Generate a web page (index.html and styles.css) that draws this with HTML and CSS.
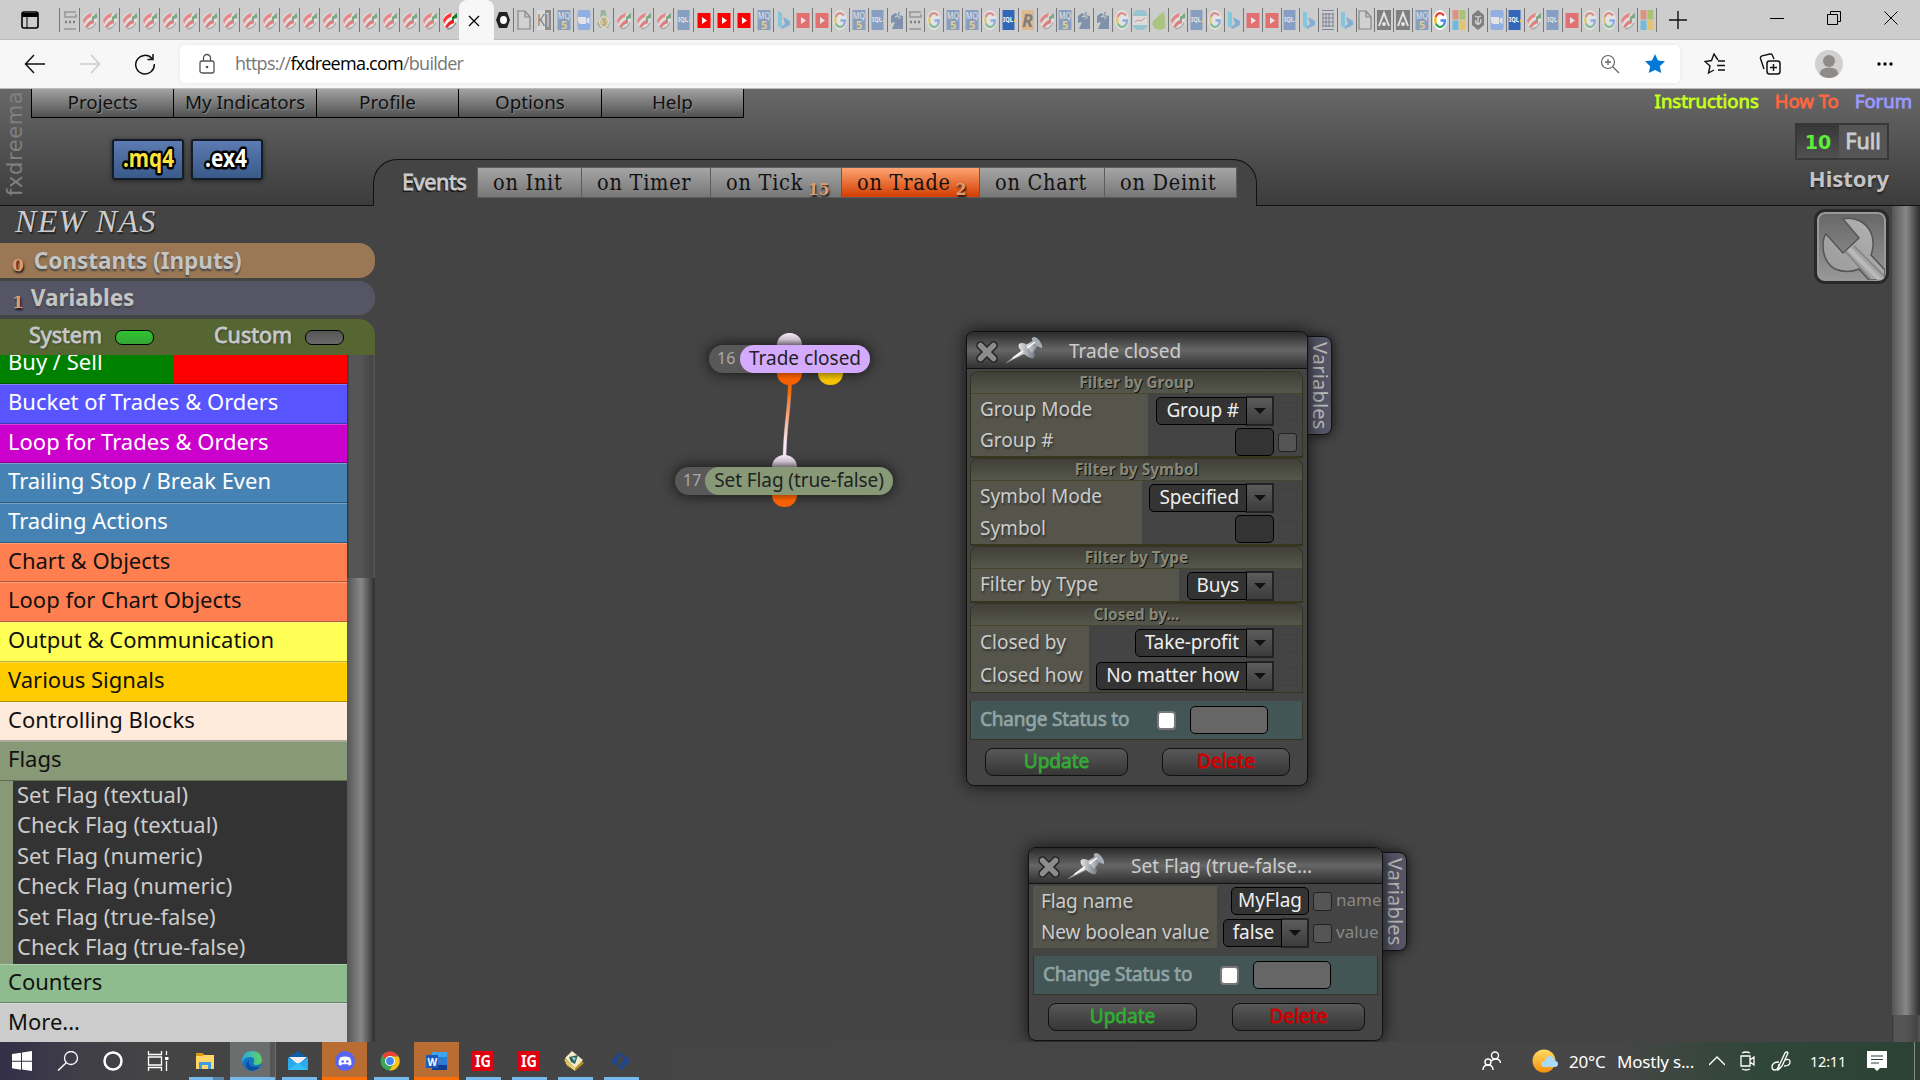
FILE: index.html
```html
<!DOCTYPE html>
<html lang="en">
<head>
    <meta charset="UTF-8">
    <title>fxDreema builder</title>
    <link rel="stylesheet" href="styles.css">
</head>
<body>
    <svg class="sprite">
        <symbol id="i-fx" viewBox="0 0 14 20" preserveAspectRatio="none"><ellipse cx="7" cy="11" rx="7" ry="8" fill="#f2f2f2"/><path d="M0 10Q3 4 9 3l-1 4Q4 8 1 14z" fill="#f33"/><path d="M2 17Q5 11 11 9v4q-4 1-7 5z" fill="#e22"/><path d="M9 7l5-4v5q-3 0-5 3z" fill="#1a7a2a"/><path d="M4 18.500q6 1 9-6" fill="none" stroke="#888" stroke-width="1.500"/></symbol>
        <symbol id="i-yt" viewBox="0 0 14 20" preserveAspectRatio="none"><path d="M.5 3h13v15H.5z" fill="#f00"/><path d="M5 7l5 3.500-5 3.500z" fill="#fff"/></symbol>
        <symbol id="i-g" viewBox="0 0 14 20" preserveAspectRatio="none"><ellipse cx="7" cy="10" rx="7" ry="10" fill="#fff"/><g fill="none" stroke-width="2.300"><path d="M11 5.500Q9 3.200 7 3.200 4 3.200 2.700 7" stroke="#ea4335"/><path d="M2.700 7q-1 3 0 6.500" stroke="#fbbc05"/><path d="M2.700 13.500Q4.500 17 7 17q2 0 3.500-1.700" stroke="#34a853"/><path d="M10.500 15.300q1.500-2 1.500-4.800H7.500" stroke="#4285f4"/></g></symbol>
        <symbol id="i-mq5" viewBox="0 0 14 20" preserveAspectRatio="none"><path d="M.5 0h13v20H.5z" fill="#3568b5"/><text x="1" y="8.500" font-size="9" textLength="12" lengthAdjust="spacingAndGlyphs" fill="#fff">MQ</text><text x="4" y="18.500" font-size="11" font-weight="bold" fill="#fc3">5</text></symbol>
        <symbol id="i-mql" viewBox="0 0 14 20" preserveAspectRatio="none"><path d="M.5 0h12v20H.5z" fill="#3467b8"/><text x="1" y="12" font-size="7" font-weight="bold" textLength="10" lengthAdjust="spacingAndGlyphs" fill="#fff">IQL</text><path d="M12 9l2 3h-2z" fill="#fc3"/></symbol>
        <symbol id="i-bing" viewBox="0 0 14 20" preserveAspectRatio="none"><path d="M1 1l4 2v13l-2 2-2-2z" fill="#29c3f0"/><path d="M6 7l7 4v4l-8 4-1-2 4-3z" fill="#2d8bdf"/></symbol>
        <symbol id="i-zoom" viewBox="0 0 14 20" preserveAspectRatio="none"><rect x=".5" width="13" height="20" rx="2" fill="#4a8cff"/><path d="M1 7h8v7H3q-2-1-2-3zM9.500 9l3-2v7l-3-2z" fill="#fff"/></symbol>
        <symbol id="i-horse" viewBox="0 0 14 20" preserveAspectRatio="none"><path d="M1 6l4-3 2 1 3-3-1 4 4 1v13H2l3-7-4 1z" fill="#254a85"/><path d="M7 3l1 2-3 2 5-1M8 9l3-2" stroke="#ccc" fill="none"/></symbol>
        <symbol id="i-lines" viewBox="0 0 14 20" preserveAspectRatio="none"><path d="M1 2h12M2 2v5h11v-3M1 19h12" stroke="#555" fill="none" stroke-width="1.500"/><path d="M2 12h2m2 0h2m2 0h2" stroke="#222" stroke-width="2.500"/></symbol>
        <symbol id="i-doc" viewBox="0 0 14 20" preserveAspectRatio="none"><path d="M1 1h7l5 6v12H1zM8 1v6h5" fill="#e2e2e2" fill-opacity=".5" stroke="#333" stroke-width="1.200"/></symbol>
        <symbol id="i-k" viewBox="0 0 14 20" preserveAspectRatio="none"><path d="M0 0h8v20H0z" fill="#e8e8e8"/><path d="M8 0h6v20H8z" fill="#444"/><text x="0" y="16" font-size="16" textLength="8" lengthAdjust="spacingAndGlyphs" fill="#222">K</text><path d="M9 4l2-1v14" stroke="#fff" fill="none"/></symbol>
        <symbol id="i-coin" viewBox="0 0 14 20" preserveAspectRatio="none"><path d="M4 0h4l2 7 3 6-2 5H3l-3-4 3-6z" fill="#5c9457"/><ellipse cx="7" cy="12" rx="4.500" ry="6" fill="#e2b545" stroke="#fff"/><path d="M5.500 9.500q3-1 2.500 1l-1.500 1.500q3 0 1.500 2.500l-2.500.5" fill="none" stroke="#25518c"/></symbol>
        <symbol id="i-nut" viewBox="0 0 14 20" preserveAspectRatio="none"><path d="M3 2h8l3 8-3 8H3l-3-8z" fill="#222"/><ellipse cx="7.500" cy="10" rx="3.500" ry="4" fill="#fff"/></symbol>
        <symbol id="i-r" viewBox="0 0 14 20" preserveAspectRatio="none"><path d="M1 0h12v20H1z" fill="#f4a142"/><text x="1" y="17" font-size="18" font-style="italic" font-weight="bold" textLength="11" lengthAdjust="spacingAndGlyphs" fill="#222">R</text></symbol>
        <symbol id="i-chart" viewBox="0 0 14 20" preserveAspectRatio="none"><rect width="14" height="20" rx="5" fill="#55bcd5"/><path d="M0 6h14v9H0z" fill="#eee"/><path d="M2 12l3-2 3 1 4-3" stroke="#e33" fill="none"/></symbol>
        <symbol id="i-leaf" viewBox="0 0 14 20" preserveAspectRatio="none"><path d="M12 1q2 10 1 17-4 3-9 1-5-2-3-8z" fill="#80ba27"/></symbol>
        <symbol id="i-grid" viewBox="0 0 14 20" preserveAspectRatio="none"><path d="M1 .500h12M1 19.500h12M1 4h12M1 8h12M1 12h12M1 16h12M2 3v14M5 3v14M8 3v14M12 3v14" stroke="#235"/></symbol>
        <symbol id="i-a" viewBox="0 0 14 20" preserveAspectRatio="none"><path d="M0 0h14v20H0z" fill="#222"/><path d="M2 16l5-13 5 13" stroke="#fff" stroke-width="2" fill="none"/><circle cx="7" cy="14" r="2" fill="#fff"/></symbol>
        <symbol id="i-ms" viewBox="0 0 14 20" preserveAspectRatio="none"><path d="M.5 0h6v9.500h-6z" fill="#f25022"/><path d="M7.500 0h6v9.500h-6z" fill="#7fba00"/><path d="M.5 10.500h6V20h-6z" fill="#00a4ef"/><path d="M7.500 10.500h6V20h-6z" fill="#ffb900"/></symbol>
        <symbol id="i-nyt" viewBox="0 0 14 20" preserveAspectRatio="none"><path d="M7 0l6 5v10l-6 5-6-5V5z" fill="#222"/><path d="M4 6q3 2 6 0M7 7v8M10 9q0 6-4 5-2-1-1-4" stroke="#ddd" fill="none" stroke-width="1.300"/></symbol>
        <symbol id="i-pin" viewBox="0 0 38 28"><path d="M1 27L17 14l4 3z" fill="#ddd" stroke="#777" stroke-width=".6"/><path d="M14 8q4-3 11 3t4 11q-5 1-11-5t-4-9z" fill="url(#pinGrad)"/><path d="M21 9l8-5 5 5-7 8z" fill="url(#pinGrad)"/><path d="M27 2q3-3 7 2t3 8q-3 0-7-4t-3-6z" fill="#a5acb3"/><path d="M22 12l8-6M8 22l10-7" stroke="#fff" stroke-width="1.500"/></symbol>
        <symbol id="i-x" viewBox="0 0 24 24"><path d="M5.500 5.500l13 13M18.500 5.500l-13 13" stroke="#222" stroke-width="8.500" stroke-linecap="round"/><path d="M5.500 5.500l13 13M18.500 5.500l-13 13" stroke="#8c8c8c" stroke-width="5.500" stroke-linecap="round"/></symbol>
    </svg>

    <div class="tabstrip">
        <svg class="tab-menu" width="20" height="20" viewBox="0 0 20 20"><rect x="2" y="2" width="16" height="16" rx="2" fill="none" stroke="#000" stroke-width="1.600"/><path d="M2 3h16v4H2z"/><path d="M7 7v11" stroke="#000"/></svg>
        <div class="tabs" id="tabs-left"></div>
        <div class="tab-active"><svg width="12" height="12" viewBox="0 0 12 12"><path d="M1 1l10 10M11 1L1 11" stroke="#000" stroke-width="1.300"/></svg></div>
        <div class="tabs" id="tabs-mid"></div>
        <div class="tabs" id="tabs-right"></div>
        <svg class="tab-plus" width="18" height="18" viewBox="0 0 18 18"><path d="M9 0v18M0 9h18" stroke="#111" stroke-width="1.400"/></svg>
        <div class="window-buttons">
            <svg width="14" height="14" viewBox="0 0 14 14"><path d="M0 7.500h14" stroke="#000"/></svg>
            <svg width="14" height="14" viewBox="0 0 14 14"><path d="M.5 3.500h10v10H.5zM3.500 3.500v-3h10v10h-3" fill="none" stroke="#000"/></svg>
            <svg width="14" height="14" viewBox="0 0 14 14"><path d="M.5.5l13 13M13.500.5l-13 13" stroke="#000"/></svg>
        </div>
    </div>

    <div class="toolbar">
        <div class="nav">
            <svg width="22" height="20" viewBox="0 0 22 20"><path d="M21 10H2M10 1L1.500 10l8.500 9" fill="none" stroke="#111" stroke-width="1.500"/></svg>
            <svg width="22" height="20" viewBox="0 0 22 20"><path d="M1 10h19M12 1l8.500 9-8.500 9" fill="none" stroke="#ccc" stroke-width="1.500"/></svg>
            <svg width="22" height="22" viewBox="0 0 22 22"><path d="M18 5.500A9.300 9.300 0 1 0 20.300 11M19 1v5.500h-5.500" fill="none" stroke="#111" stroke-width="1.500"/></svg>
        </div>
        <div class="address">
            <svg width="18" height="22" viewBox="0 0 18 22"><rect x="2" y="8" width="14" height="12" rx="2" fill="none" stroke="#555" stroke-width="1.300"/><path d="M5.500 8V5a3.500 3.500 0 0 1 7 0v3" fill="none" stroke="#555" stroke-width="1.300"/><circle cx="9" cy="14" r="1.300" fill="#555"/></svg>
            <span class="url">https://<b>fxdreema.com</b>/builder</span>
            <svg class="zoom-icon" width="20" height="20" viewBox="0 0 20 20"><circle cx="8" cy="8" r="6.500" fill="none" stroke="#666" stroke-width="1.200"/><path d="M13 13l6 6M8 5v6M5 8h6" stroke="#666" stroke-width="1.300"/></svg>
            <svg width="22" height="22" viewBox="0 0 22 22"><path d="M11 1l3 6.500 7 .8-5.200 4.900L17.300 20 11 17l-6.300 3 1.500-6.800L1 8.300l7-.8z" fill="#0078d7"/></svg>
        </div>
        <div class="tools">
            <svg width="22" height="22" viewBox="0 0 22 22"><path d="M14 7L10 1 7.500 7.500 1 8.500l5 4.500-1.500 7L10 17M14 8h7M13 12.500h8M14 17h7" fill="none" stroke="#111" stroke-width="1.400"/></svg>
            <svg width="22" height="22" viewBox="0 0 22 22"><rect x="8" y="8" width="13" height="13" rx="2.500" fill="none" stroke="#111" stroke-width="1.500"/><path d="M14.500 11v7M11 14.500h7M5 16L1.500 5.500q-.5-2 1.500-2.700L11 1q2-.3 2.500 1.500L15 6" fill="none" stroke="#111" stroke-width="1.400"/></svg>
            <svg width="28" height="28" viewBox="0 0 28 28"><circle cx="14" cy="14" r="14" fill="#d2d0ce"/><circle cx="14" cy="11" r="6" fill="#8f8b88"/><path d="M4.500 24q1-6.500 9.500-6.500T23.500 24Q20 28 14 28t-9.500-4z" fill="#8f8b88"/></svg>
            <svg width="18" height="6" viewBox="0 0 18 6"><circle cx="3" cy="3" r="1.700"/><circle cx="9" cy="3" r="1.700"/><circle cx="15" cy="3" r="1.700"/></svg>
        </div>
    </div>

    <div class="app">
        <div class="header">
            <div class="brand">fxdreema</div>
            <div class="header-left">
                <div class="menu">
                    <div>Projects</div>
                    <div>My Indicators</div>
                    <div>Profile</div>
                    <div>Options</div>
                    <div>Help</div>
                </div>
                <div class="exports">
                    <div class="export"><svg width="68" height="38"><text class="mq" x="9" y="26" textLength="51" lengthAdjust="spacingAndGlyphs">.mq4</text></svg></div>
                    <div class="export"><svg width="68" height="38"><text class="ex" x="12" y="26" textLength="42" lengthAdjust="spacingAndGlyphs">.ex4</text></svg></div>
                </div>
            </div>
            <div class="events">
                <span class="events-title">Events</span>
                <div class="event-list">
                    <div class="event e-init">on Init</div>
                    <div class="event e-timer">on Timer</div>
                    <div class="event e-tick">on Tick <i>15</i></div>
                    <div class="event e-trade">on Trade <i>2</i></div>
                    <div class="event e-chart">on Chart</div>
                    <div class="event e-deinit">on Deinit</div>
                </div>
            </div>
            <div class="header-right">
                <div class="links"><span class="l-inst">Instructions</span><span class="l-how">How To</span><span class="l-forum">Forum</span></div>
                <div class="full"><b>10</b><span>Full</span></div>
                <div class="history">History</div>
            </div>
        </div>

        <div class="main">
            <div class="sidebar">
                <div class="project-name">NEW NAS</div>
                <div class="bar constants"><i>0</i>Constants (Inputs)</div>
                <div class="bar variables"><i>1</i>Variables</div>
                <div class="sources">
                    <span class="src-system">System</span><span class="led on"></span>
                    <span class="src-custom">Custom</span><span class="led"></span>
                </div>
                <div class="library">
                    <div class="blocks">
                        <div class="cat buysell">Buy / Sell</div>
                        <div class="cat bucket">Bucket of Trades &amp; Orders</div>
                        <div class="cat loop">Loop for Trades &amp; Orders</div>
                        <div class="cat trading">Trailing Stop / Break Even</div>
                        <div class="cat trading">Trading Actions</div>
                        <div class="cat charts">Chart &amp; Objects</div>
                        <div class="cat charts">Loop for Chart Objects</div>
                        <div class="cat output">Output &amp; Communication</div>
                        <div class="cat signals">Various Signals</div>
                        <div class="cat control">Controlling Blocks</div>
                        <div class="cat flags">Flags</div>
                        <div class="sub">
                            <div>Set Flag (textual)</div>
                            <div>Check Flag (textual)</div>
                            <div>Set Flag (numeric)</div>
                            <div>Check Flag (numeric)</div>
                            <div>Set Flag (true-false)</div>
                            <div>Check Flag (true-false)</div>
                        </div>
                        <div class="cat counters">Counters</div>
                        <div class="cat more">More...</div>
                    </div>
                    <div class="scroll"><div class="thumb"></div></div>
                </div>
            </div>

            <div class="canvas">
                <svg class="wire" width="30" height="90" viewBox="0 0 30 90">
                    <linearGradient id="pinGrad"><stop offset="0" stop-color="#e4e6e8"/><stop offset="1" stop-color="#707880"/></linearGradient>
                    <linearGradient id="wireGrad" x1="0" y1="0" x2="0" y2="1"><stop offset=".15" stop-color="#ff6600"/><stop offset=".8" stop-color="#f8e8f8"/></linearGradient>
                    <path d="M15 5C15 35 10 50 9.500 85" fill="none" stroke="#777" stroke-width="4"/>
                    <path d="M15 5C15 35 10 50 9.500 85" fill="none" stroke="url(#wireGrad)" stroke-width="3"/>
                </svg>
                <div class="node node-trade">
                    <span class="port in"></span><span class="port out"></span><span class="port alt"></span>
                    <span class="num">16</span><span class="name">Trade closed</span>
                </div>
                <div class="node node-flag">
                    <span class="port in"></span><span class="port out"></span>
                    <span class="num">17</span><span class="name">Set Flag (true-false)</span>
                </div>

                <div class="panel panel-trade">
                    <div class="side-tab">Variables</div>
                    <div class="window">
                        <div class="title"><svg width="24" height="24"><use href="#i-x"/></svg><svg width="38" height="28"><use href="#i-pin"/></svg><span>Trade closed</span></div>
                        <div class="group g1">
                            <div class="group-title">Filter by Group</div>
                            <div class="group-body">
                                <div class="labels"><div>Group Mode</div><div>Group #</div></div>
                                <div class="fields">
                                    <div class="field"><span class="select">Group #<i></i></span><span class="check off"></span></div>
                                    <div class="field"><span class="input"></span><span class="check"></span></div>
                                </div>
                            </div>
                        </div>
                        <div class="group g2">
                            <div class="group-title">Filter by Symbol</div>
                            <div class="group-body">
                                <div class="labels"><div>Symbol Mode</div><div>Symbol</div></div>
                                <div class="fields">
                                    <div class="field"><span class="select">Specified<i></i></span><span class="check off"></span></div>
                                    <div class="field"><span class="input"></span><span class="check off"></span></div>
                                </div>
                            </div>
                        </div>
                        <div class="group g3">
                            <div class="group-title">Filter by Type</div>
                            <div class="group-body">
                                <div class="labels"><div>Filter by Type</div></div>
                                <div class="fields">
                                    <div class="field"><span class="select">Buys<i></i></span><span class="check off"></span></div>
                                </div>
                            </div>
                        </div>
                        <div class="group g4">
                            <div class="group-title">Closed by...</div>
                            <div class="group-body">
                                <div class="labels"><div>Closed by</div><div>Closed how</div></div>
                                <div class="fields">
                                    <div class="field"><span class="select">Take-profit<i></i></span><span class="check off"></span></div>
                                    <div class="field"><span class="select">No matter how<i></i></span><span class="check off"></span></div>
                                </div>
                            </div>
                        </div>
                        <div class="status"><span>Change Status to</span><b></b><i></i></div>
                        <div class="actions"><div class="btn update">Update</div><div class="btn delete">Delete</div></div>
                    </div>
                </div>

                <div class="panel panel-flag">
                    <div class="side-tab">Variables</div>
                    <div class="window">
                        <div class="title"><svg width="24" height="24"><use href="#i-x"/></svg><svg width="38" height="28"><use href="#i-pin"/></svg><span>Set Flag (true-false...</span></div>
                        <div class="group-body">
                            <div class="labels"><div>Flag name</div><div>New boolean value</div></div>
                            <div class="fields">
                                <div class="field"><span class="input text">MyFlag</span><span class="check"></span><em>name</em></div>
                                <div class="field"><span class="select">false<i></i></span><span class="check"></span><em>value</em></div>
                            </div>
                        </div>
                        <div class="status"><span>Change Status to</span><b></b><i></i></div>
                        <div class="actions"><div class="btn update">Update</div><div class="btn delete">Delete</div></div>
                    </div>
                </div>

                <div class="settings">
                    <svg width="67" height="67" viewBox="0 0 67 67">
                        <linearGradient id="wrenchGrad" x1="0" y1="1" x2="1" y2="0"><stop offset="0" stop-color="#999"/><stop offset="1" stop-color="#b4b4b4"/></linearGradient>
                        <path d="M25 6q8-2 17 2 14 8 13 25-1 7-2 9l14 15v10H51L41 56q-12 5-24 0Q5 49 5 32q0-7 3-11l17 19 16-15z" fill="url(#wrenchGrad)" stroke="#555" stroke-width="1.500"/>
                        <path d="M27 38l26 29M36 33l31 31" stroke="#777" stroke-width="2" opacity=".6"/>
                        <path d="M31 36l34 34" stroke="#c4c4c4" stroke-width="4" opacity=".7"/>
                    </svg>
                </div>
            </div>
            <div class="scroll page-scroll"><div class="thumb"></div></div>
        </div>
    </div>

    <div class="taskbar">
        <div class="task"><svg width="20" height="20" viewBox="0 0 20 20"><path d="M0 3l9-1.300v8H0zM10 1.500L20 0v9.700H10zM0 10.700h9v8L0 17.300zM10 10.700h10V20l-10-1.500z" fill="#fff"/></svg></div>
        <div class="task"><svg width="22" height="20" viewBox="0 0 22 20"><circle cx="14" cy="7" r="6.500" fill="none" stroke="#fff" stroke-width="1.300"/><path d="M9.500 11.500L1 19.500" stroke="#fff" stroke-width="1.500"/></svg></div>
        <div class="task"><svg width="20" height="20" viewBox="0 0 20 20"><circle cx="10" cy="10" r="8.500" fill="none" stroke="#fff" stroke-width="2.500"/></svg></div>
        <div class="task"><svg width="22" height="20" viewBox="0 0 22 20"><path d="M1.500 0v3.500h13V0M1.500 20v-3.500h13V20M1.500 6h13v8h-13zM19.500 0v4M19.500 10v10" fill="none" stroke="#fff" stroke-width="1.300"/><path d="M18 6h3.500v3H18z" fill="#fff"/></svg></div>
        <div class="task open split"><svg width="20" height="18" viewBox="0 0 20 18"><path d="M1 1h6l2 2h10v14H1z" fill="#ffd665"/><path d="M1 1h6l2 2-2 1H1z" fill="#d99a14"/><path d="M4 17V10h12v7h-3v-4H7v4z" fill="#3f9be6"/></svg></div>
        <div class="task open current"><svg width="22" height="22" viewBox="0 0 22 22"><linearGradient id="edgeA" x1="0" x2="1"><stop offset="0" stop-color="#2aa9e0"/><stop offset="1" stop-color="#5fd35f"/></linearGradient><circle cx="11" cy="11" r="10" fill="#1673c4"/><path d="M1 10Q2 1 11 1t10 9q0 5-6 5-4 0-2-3 1-5-4-5-6 0-8 6z" fill="url(#edgeA)"/><path d="M8 10q-2 8 11 7-5 5-11 3Q2 16 8 10z" fill="#0c4fa0"/></svg></div>
        <div class="task open"><svg width="20" height="20" viewBox="0 0 20 20"><path d="M0 6.500L10 0l10 6.500L10 14z" fill="#0d5da8"/><path d="M1 6h18l-9 8z" fill="#f0f0f0"/><path d="M0 6.500L10 13l10-6.500V19H0z" fill="#2fa9ee"/><path d="M0 19l10-7 10 7z" fill="#36c0f8"/></svg></div>
        <div class="task alert"><svg width="20" height="20" viewBox="0 0 20 20"><circle cx="10" cy="10" r="10" fill="#5865f2"/><path d="M5 6.500q5-2 10 0 2 4 1.500 7l-2.500 1.300-1-1.500H7l-1 1.500-2.500-1.300q-.5-3 1.500-7z" fill="#fff"/><circle cx="7.700" cy="10.500" r="1.300" fill="#5865f2"/><circle cx="12.300" cy="10.500" r="1.300" fill="#5865f2"/></svg></div>
        <div class="task open"><svg width="20" height="20" viewBox="0 0 20 20"><circle cx="10" cy="10" r="9.500" fill="#3aa757"/><path d="M10 .5A9.500 9.500 0 0 1 18.200 5.500H10a4.500 4.500 0 0 0-4 2.500L2 5A9.500 9.500 0 0 1 10 .5z" fill="#ea4335"/><path d="M18.500 5.500A9.500 9.500 0 0 1 9.500 19.500l4.500-7.500a4.500 4.500 0 0 0-4-6.500z" fill="#fbc116"/><circle cx="10" cy="10" r="4.500" fill="#4285f4" stroke="#fff" stroke-width="1.200"/></svg></div>
        <div class="task alert word"><svg width="21" height="20" viewBox="0 0 21 20"><path d="M6 1h15v18H6z" fill="#2b7cd3"/><path d="M6 1h15v5H6z" fill="#41a5ee"/><path d="M6 14h15v5H6z" fill="#103f91"/><path d="M0 4h12v13H0z" fill="#185abd"/><text x="1.500" y="14.500" font-size="10" font-weight="bold" fill="#fff">W</text></svg></div>
        <div class="task open ig"><svg width="21" height="20" viewBox="0 0 21 20"><path d="M0 0h21v20H0z" fill="#e1000f"/><text x="3" y="16" font-size="16" font-weight="bold" textLength="16" lengthAdjust="spacingAndGlyphs" fill="#fff">IG</text></svg></div>
        <div class="task open ig"><svg width="21" height="20" viewBox="0 0 21 20"><path d="M0 0h21v20H0z" fill="#e1000f"/><text x="3" y="16" font-size="16" font-weight="bold" textLength="16" lengthAdjust="spacingAndGlyphs" fill="#fff">IG</text></svg></div>
        <div class="task open"><svg width="20" height="20" viewBox="0 0 20 20"><path d="M0 9l7-7 13 10-9 8L3 15z" fill="#b8901f"/><path d="M1 7l7-7 11 9-8 8z" fill="#f3ecc8"/><path d="M1 9l10 9M2 12l9 7" stroke="#fff0b0"/><path d="M5 6l9-2-3 9-4-2z" fill="#2c6a57"/><path d="M8 6l4 1-2 3z" fill="#a5d4ee"/></svg></div>
        <div class="task open"><svg width="20" height="18" viewBox="0 0 20 18"><path d="M10 0L1 9l5 5 2-2V7l5-5zM12 5l3-2 5 6-9 9-3-3 4-3V9l3-2z" fill="#1f4591"/></svg></div>
        <div class="tray">
            <svg class="t-people" width="20" height="20" viewBox="0 0 20 20"><g fill="none" stroke="#fff" stroke-width="1.400"><circle cx="13" cy="4.500" r="3.500"/><circle cx="6" cy="11" r="3"/><path d="M9 10q2-2 5-2 4 0 4.500 4M1 19q0-5 5-5t5 5"/></g></svg>
            <svg class="t-weather" width="26" height="24" viewBox="0 0 26 24"><linearGradient id="sunGrad" x1="0" y1="0" x2="0" y2="1"><stop offset="0" stop-color="#ffdb62"/><stop offset="1" stop-color="#f8900a"/></linearGradient><circle cx="12" cy="12" r="11.500" fill="url(#sunGrad)"/><path d="M13 18q-4 0-4-3t4-3q1-5 5-5 4 0 5 5 3 0 3 3t-3 3z" fill="#a9dbf8"/></svg>
            <span class="t-temp">20°C</span><span class="t-sky">Mostly s...</span>
            <svg class="t-up" width="16" height="10" viewBox="0 0 16 10"><path d="M0 9l8-8 8 8" fill="none" stroke="#fff" stroke-width="1.300"/></svg>
            <svg class="t-meet" width="16" height="20" viewBox="0 0 16 20"><path d="M1 5h9v10H1zM10 9l4-3v8l-4-3M2 2q4-2 8 0M2 18q4 2 8 0" fill="none" stroke="#fff" stroke-width="1.300"/></svg>
            <svg class="t-pen" width="20" height="20" viewBox="0 0 20 20"><path d="M8 15l6-13q2-2 3 0l-6 13-4 4zM8 11q-7 0-7 5 0 3 3 3t4-6M14 9q5-2 5 2t-6 4" fill="none" stroke="#fff" stroke-width="1.300"/></svg>
            <span class="t-time">12:11</span>
            <svg class="t-note" width="20" height="20" viewBox="0 0 20 20"><path d="M0 0h20v17h-7l-3 3-3-3H0z" fill="#fff"/><path d="M4 5h12M4 8.500h12M4 12h8" stroke="#2f4034" stroke-width="1.200"/></svg>
        </div>
    </div>

    <script src="script.js"></script>
</body>
</html>
```
FILE: styles.css
```css
* {
    box-sizing: border-box;
}
body {
    margin: 0;
    width: 1920px;
    height: 1080px;
    overflow: hidden;
    display: flex;
    flex-direction: column;
    font-family: "Noto Sans", sans-serif;
    background: #444;
}
svg {
    display: block;
    flex-shrink: 0;
}
.sprite {
    display: none;
}

/* browser */
.tabstrip {
    height: 40px;
    background: #cdcdcd;
    display: flex;
    align-items: center;
    border-bottom: 1px solid #bbb;
}
.tab-menu {
    margin: 0 19px 0 20px;
}
.tabs {
    display: flex;
}
.tab {
    width: 20px;
    height: 24px;
    border-left: 1px solid #777;
    display: flex;
    align-items: center;
    justify-content: center;
}
#tabs-left {
    width: 400px;
}
#tabs-mid {
    margin-left: -1px;
}
#tabs-mid .tab:first-child {
    border-left: none;
}
#tabs-right .tab {
    width: 18.760px;
}
#tabs-right {
    border-right: 1px solid #777;
}
.tab svg {
    width: 14px;
    height: 20px;
    opacity: .45;
}
.tab.lit svg {
    opacity: 1;
}
.tab-active {
    align-self: flex-start;
    width: 35px;
    height: 41px;
    margin-bottom: -1px;
    padding-right: 5px;
    background: #f7f7f7;
    border-radius: 8px 8px 0 0;
    display: flex;
    align-items: center;
    justify-content: center;
}
.tab-plus {
    margin-left: 12px;
}
.window-buttons {
    margin-left: auto;
    margin-right: 22px;
    display: flex;
    gap: 43px;
    padding-bottom: 3px;
}
.toolbar {
    height: 49px;
    background: #f7f7f7;
    border-bottom: 1px solid #bbb;
    display: flex;
    align-items: center;
}
.nav {
    width: 180px;
    padding: 0 24px;
    display: flex;
    gap: 33px;
    align-items: center;
}
.address {
    width: 1500px;
    height: 38px;
    margin-bottom: 1px;
    background: #fff;
    border-radius: 5px;
    box-shadow: 0 0 4px #e4e4e4;
    display: flex;
    align-items: center;
    padding: 0 14px 0 18px;
}
.url {
    margin-left: 19px;
    padding-bottom: 2px;
    font-family: "Open Sans", sans-serif;
    font-size: 18px;
    letter-spacing: -.75px;
    color: #777;
}
.url b {
    font-weight: 400;
    color: #000;
}
.zoom-icon {
    margin-left: auto;
    margin-right: 24px;
}
.tools {
    flex: 1;
    padding: 0 26px 0 24px;
    display: flex;
    align-items: center;
    justify-content: space-between;
}

/* header */
.app {
    height: 953px;
    display: flex;
    flex-direction: column;
}
.header {
    height: 117px;
    flex-shrink: 0;
    display: flex;
    background: linear-gradient(#686868, #3c3c3c);
    border-bottom: 1px solid #111;
}
.brand {
    width: 31px;
    writing-mode: vertical-rl;
    transform: rotate(180deg);
    font-size: 21px;
    font-family: "DejaVu Sans", sans-serif;
    letter-spacing: .6px;
    line-height: 31px;
    text-align: right;
    color: #808080;
    padding-bottom: 2px;
}
.header-left {
    width: 342px;
}
.menu {
    width: 713px;
    height: 29px;
    display: flex;
    border: 1px solid #000;
    border-top: none;
    background: linear-gradient(#a2a2a2, #505050);
}
.menu div {
    flex: 1;
    text-align: center;
    font-size: 18.800px;
    line-height: 27px;
    color: #111;
    text-shadow: 1px 1px 1px #888;
    white-space: nowrap;
}
.menu div + div {
    border-left: 1px solid #000;
}
.exports {
    display: flex;
    gap: 7px;
    padding: 21px 0 0 81px;
}
.export {
    width: 72px;
    height: 41px;
    border: 2px solid #141c28;
    border-radius: 3px;
    background: linear-gradient(#5b7bb2, #3a5a8a);
    box-shadow: 0 1px 4px #222;
}
.export text {
    font: bold 25px "Noto Sans", sans-serif;
    fill: #fff;
    stroke: #000;
    stroke-width: 5px;
    paint-order: stroke;
    stroke-linejoin: round;
}
.export .mq {
    fill: #ffe23c;
}
.events {
    width: 884px;
    height: 47px;
    margin-top: 70px;
    background: #444;
    border: 1px solid #111;
    border-bottom: none;
    border-radius: 24px 24px 0 0;
    display: flex;
    padding: 7px 0 0 28px;
}
.events-title {
    width: 75px;
    font-size: 21.500px;
    line-height: 29px;
    color: #ccc;
    letter-spacing: -.3px;
    -webkit-text-stroke: .8px #ccc;
    text-shadow: -1px 2px 1px #111;
}
.event-list {
    display: flex;
    height: 31px;
    border: 1px solid #5c5c5c;
}
.event {
    font-family: "DejaVu Serif Condensed", "DejaVu Serif", serif;
    font-stretch: condensed;
    font-size: 21.500px;
    line-height: 29px;
    padding-left: 15px;
    letter-spacing: .75px;
    color: #111;
    background: linear-gradient(#a5a5a5, #777);
    border-right: 1px solid #5c5c5c;
    white-space: nowrap;
}
.event i, .bar i {
    font-style: normal;
    font-weight: bold;
    font-size: 17px;
    letter-spacing: 0;
    color: #dd9b72;
    text-shadow: 1px 2px 2px #111;
    position: relative;
    top: 5px;
}
.event i {
    margin-left: -2px;
}
.e-init { width: 104px; }
.e-timer { width: 129px; }
.e-tick { width: 131px; }
.e-trade {
    width: 138px;
    background: linear-gradient(#ffa472, #d23d00);
}
.e-chart { width: 125px; }
.e-deinit {
    width: 131px;
    border-right: none;
}
.header-right {
    margin-left: auto;
    display: flex;
    flex-direction: column;
    align-items: flex-end;
    padding-right: 31px;
}
.links {
    display: flex;
    gap: 16px;
    margin-right: -23px;
    font-size: 18.500px;
    line-height: 23px;
    margin-bottom: 1px;
}
.l-inst { color: #c6ff1a; -webkit-text-stroke: .8px #c6ff1a; }
.l-how { color: #ff6640; -webkit-text-stroke: .8px #ff6640; }
.l-forum { color: #9a9aff; -webkit-text-stroke: .8px #9a9aff; }
.full {
    width: 94px;
    height: 37px;
    margin-top: 10px;
    border: 2px solid #383838;
    background: #555;
    display: flex;
}
.full b {
    width: 42px;
    font: bold 19px/35px "DejaVu Sans", sans-serif;
    text-align: center;
    color: #5cec3a;
    background: linear-gradient(#383838, #505050);
}
.full span {
    flex: 1;
    font-size: 21.500px;
    line-height: 31px;
    text-align: center;
    color: #ccc;
    -webkit-text-stroke: .8px #ccc;
}
.history {
    margin-top: 3px;
    font-size: 22px;
    line-height: 30px;
    font-weight: bold;
    color: #c4c4c4;
    text-shadow: 0 2px 2px #222;
}

/* sidebar */
.main {
    flex: 1;
    min-height: 0;
    display: flex;
}
.sidebar {
    width: 375px;
    display: flex;
    flex-direction: column;
}
.project-name {
    height: 37px;
    padding-left: 15px;
    font: italic 32px/31px "Liberation Serif", serif;
    letter-spacing: 1.300px;
    color: #ccc;
    text-shadow: 1px 2px 1px #222;
}
.bar {
    height: 35px;
    margin-bottom: 3px;
    padding-left: 12px;
    border-radius: 0 16px 16px 0;
    font-weight: bold;
    font-size: 22.500px;
    line-height: 35px;
    color: #c4c4c4;
    text-shadow: 0 2px 2px #444;
}
.bar i {
    font-family: "DejaVu Serif", serif;
    top: 2px;
    margin-right: 10px;
}
.constants { background: #9a7755; }
.variables {
    height: 34px;
    margin-bottom: 4px;
    background: #555566;
    line-height: 33px;
}
.variables i {
    margin-right: 7px;
}
.sources {
    height: 36px;
    background: #556633;
    border-radius: 0 16px 0 0;
    display: flex;
    align-items: center;
    padding: 0 0 5px 29px;
    font-size: 21.500px;
    line-height: 31px;
    color: #c8c8c8;
    -webkit-text-stroke: .8px #c8c8c8;
    text-shadow: 1px 1px 2px #333;
}
.src-system { width: 86px; }
.src-custom { width: 91px; margin-left: 60px; }
.led {
    width: 39px;
    height: 15px;
    margin-top: 6px;
    border: 1px solid #000;
    border-radius: 7px;
    background: linear-gradient(#555, #6a6a6a);
}
.led.on {
    background: linear-gradient(#2fc430, #36a535);
}
.library {
    flex: 1;
    min-height: 0;
    display: flex;
}
.blocks {
    width: 347px;
    height: 687px;
    overflow: hidden;
    display: flex;
    flex-direction: column;
    justify-content: flex-end;
}
.cat {
    height: 39.720px;
    flex-shrink: 0;
    padding-left: 8px;
    font-size: 22px;
    line-height: 33.500px;
    color: #111;
    border-top: 1px solid rgba(255, 255, 255, .25);
    border-bottom: 1px solid rgba(0, 0, 0, .3);
}
.buysell { color: #fff; background: linear-gradient(90deg, green 50%, red 50%); }
.bucket { color: #fff; background: #5855ff; }
.loop { color: #fff; background: #cc00cc; }
.trading { color: #fff; background: #4682b4; }
.charts { background: #ff7f50; }
.output { background: #ffff55; }
.signals { background: #ffcc00; }
.control { background: #ffebdc; }
.flags { background: #889977; }
.counters { background: #8fbc8f; height: 39px; }
.more { background: #ccc; height: 39px; border-bottom: none; line-height: 35px; }
.sub {
    height: 183px;
    flex-shrink: 0;
    border-left: 13px solid #889977;
    background: #333;
    padding-left: 4px;
    font-size: 22px;
    color: #ccc;
}
.sub div {
    height: 30.400px;
    line-height: 26px;
}
.scroll {
    width: 28px;
    height: 687px;
    background: linear-gradient(90deg, #333 0, #555 8%, #555 50%, #444 92%, #555 96%);
    padding-top: 223px;
}
.thumb {
    height: 464px;
    background: linear-gradient(90deg, #555, #888 50%, #808080 55%, #333 96%);
}
.page-scroll {
    height: 836px;
    padding: 0 0 27px;
}
.page-scroll .thumb {
    height: 809px;
}

/* canvas */
.canvas {
    position: relative;
    width: 1517px;
    height: 836px;
    overflow: hidden;
}
.wire {
    position: absolute;
    left: 400px;
    top: 167px;
}
.node {
    position: absolute;
    height: 28px;
    display: flex;
    background: #585858;
    border-radius: 14px;
    box-shadow: 0 0 14px #111;
}
.node-trade { left: 334px; top: 139px; width: 161px; }
.node-flag { left: 300px; top: 261px; width: 218px; }
.num {
    width: 31px;
    padding-left: 8px;
    font-size: 16px;
    line-height: 26px;
    color: #aaa;
}
.name {
    flex: 1;
    border-radius: 14px;
    font-size: 19px;
    line-height: 26px;
    text-align: center;
    white-space: nowrap;
    color: #222;
    background: #d4aaff;
}
.node-flag .name {
    background: #889977;
    letter-spacing: -.1px;
}
.node-flag .num {
    width: 30px;
}
.port {
    position: absolute;
    left: 68px;
    width: 25px;
    height: 12px;
}
.node-flag .port { left: 97px; }
.port.in {
    top: -12px;
    border-radius: 12px 12px 0 0;
    background: linear-gradient(#f8e8f8, #cbbdcb 55%, #706870);
}
.port.out, .port.alt {
    bottom: -12px;
    border-radius: 0 0 12px 12px;
    background: linear-gradient(#b84800, #f76000 50%);
}
.node-trade .port.alt {
    left: 109px;
    background: linear-gradient(#a88a00, #f4c400 60%);
}
.panel {
    position: absolute;
    font-size: 19px;
    color: #ccc;
}
.panel-trade { left: 591px; top: 125px; }
.panel-flag { left: 653px; top: 641px; }
.window {
    position: relative;
    width: 342px;
    height: 455px;
    border: 1px solid #111;
    border-radius: 8px;
    background: #444;
    box-shadow: 0 0 16px #111;
    padding: 0 4px 0 3px;
}
.panel-flag .window {
    width: 355px;
    height: 194px;
    padding-left: 4px;
}
.side-tab {
    position: absolute;
    right: -24px;
    top: 5px;
    width: 26px;
    height: 99px;
    writing-mode: vertical-rl;
    border: 1px solid #111;
    border-radius: 0 8px 8px 0;
    background: #555566;
    box-shadow: 0 0 12px #111;
    font-size: 20px;
    line-height: 22px;
    letter-spacing: .2px;
    text-align: center;
    color: #bbb;
}
.title {
    height: 37px;
    margin: 0 -4px 0 -3px;
    border-bottom: 1px solid #111;
    border-radius: 7px 7px 0 0;
    background: linear-gradient(#2a2a2a, #666 50%, #333 98%);
    display: flex;
    align-items: center;
    padding-left: 8px;
}
.title svg:first-child {
    margin-top: 3px;
}
.title svg + svg {
    margin-left: 6px;
}
.title span {
    margin-left: 26px;
    white-space: nowrap;
}
.panel-trade .title span {
    padding-top: 1px;
}
.panel-flag .title {
    height: 36px;
    margin-left: -4px;
}
.group {
    border: 1px solid #34351f;
    border-bottom-width: 2px;
    border-radius: 8px 8px 0 0;
    display: flex;
    flex-direction: column;
}
.g1 { height: 87px; margin-top: 2px; }
.g2 { height: 88px; }
.g3 { height: 57px; }
.g4 { height: 90px; border-bottom-width: 1px; }
.group-title {
    height: 22px;
    font-weight: bold;
    font-size: 15.500px;
    line-height: 21px;
    text-align: center;
    color: #888877;
    text-shadow: 1px 1px 0 #111;
    background: linear-gradient(#404038, #55564c);
    border-bottom: 1px solid #44452f;
    border-radius: 8px 8px 0 0;
}
.group-body {
    flex: 1;
    display: flex;
}
.labels {
    padding: 0 0 0 9px;
    background: #55554c;
    line-height: 31.500px;
    white-space: nowrap;
    text-shadow: 1px 2px 2px #333;
}
.g1 .labels { width: 177px; line-height: 31px; }
.g2 .labels { width: 171px; }
.g3 .labels { width: 208px; }
.g4 .labels { width: 118px; line-height: 32.500px; }
.fields {
    flex: 1;
    display: flex;
    flex-direction: column;
    gap: 3px;
    padding: 3px 5px 0 0;
}
.g4 .fields { gap: 5px; }
.field {
    height: 28px;
    display: flex;
    align-items: center;
    justify-content: flex-end;
    gap: 4px;
}
.select, .input {
    height: 28px;
    border: 1px solid #000;
    border-radius: 5px;
    background: #333;
    color: #eee;
    line-height: 25px;
    white-space: nowrap;
}
.select {
    display: flex;
    padding-left: 9px;
    letter-spacing: -.12px;
}
.select i {
    width: 28px;
    height: 30px;
    margin: -2px -1px 0 7px;
    border: 2px solid #222;
    border-left: 1px solid #000;
    background: linear-gradient(#5c5c5c, #3c3c3c);
    display: flex;
    align-items: center;
    justify-content: center;
}
.select i::after {
    content: "";
    border: 6px solid transparent;
    border-top-color: #111;
    border-bottom: none;
}
.input {
    width: 39px;
}
.input.text {
    width: 78px;
    text-align: center;
}
.check {
    width: 19px;
    height: 19px;
    border: 1px solid #222;
    border-radius: 3px;
    background: #555;
}
.check.off {
    background: #444;
    border-color: #404040;
}
.field em {
    width: 41px;
    font-style: normal;
    font-size: 17px;
    line-height: 24px;
    padding-bottom: 3px;
    color: #888;
}
.panel-flag .group-body {
    flex: none;
    height: 62px;
    margin-top: 2px;
}
.panel-flag .labels {
    width: 184px;
    padding-left: 8px;
    line-height: 30.500px;
    letter-spacing: -.1px;
}
.panel-flag .fields { padding: 1px 1px 0 0; gap: 4px; }
.status {
    height: 39px;
    margin-top: 8px;
    border: 1px solid #34351f;
    border-top: none;
    background: #445555;
    display: flex;
    align-items: center;
    padding-left: 9px;
    color: #8fa5a5;
    -webkit-text-stroke: .7px #8fa5a5;
    letter-spacing: -.2px;
    line-height: 37px;
}
.status span {
    width: 177px;
    padding-bottom: 1px;
}
.status b {
    width: 19px;
    height: 19px;
    border: 2px solid #777;
    border-radius: 4px;
    background: #fff;
}
.status i {
    width: 78px;
    height: 28px;
    margin-left: 14px;
    border: 1px solid #000;
    border-radius: 5px;
    background: #666;
}
.actions {
    display: flex;
    justify-content: space-between;
    padding: 8px 13px 0 15px;
}
.btn {
    width: 143px;
    height: 28px;
    border: 1px solid #111;
    border-radius: 8px;
    background: linear-gradient(#585858, #363636);
    text-align: center;
    line-height: 25px;
}
.btn.delete { width: 128px; }
.update { color: #33aa33; -webkit-text-stroke: .8px #33aa33; }
.delete { color: #cc0000; -webkit-text-stroke: .8px #cc0000; }
.panel-flag .btn { width: 149px; }
.panel-flag .btn.delete { width: 133px; }
.settings {
    position: absolute;
    left: 1439px;
    top: 3px;
    width: 75px;
    height: 75px;
    border: 3px solid #292929;
    border-radius: 11px;
    background: linear-gradient(#666, #999);
    box-shadow: inset 0 0 0 2px #999;
    overflow: hidden;
    padding: 1px;
}

/* taskbar */
.taskbar {
    height: 38px;
    background: linear-gradient(90deg, #332f48, #403e48 4%, #444 8%, #464646 84%, #2f4638 92%, #2c4234);
    display: flex;
}
.task {
    width: 46px;
    height: 38px;
    display: flex;
    align-items: center;
    justify-content: center;
    border: 0 solid transparent;
    border-right-width: 1px;
    position: relative;
    flex-shrink: 0;
}
.task:nth-child(1) { width: 45px; }
.task:nth-child(3) { width: 45px; }
.task:nth-child(4) { width: 46px; }
.task.open::after {
    content: "";
    position: absolute;
    left: 6px;
    bottom: 0;
    width: 35px;
    height: 3px;
    background: #76b9ed;
}
.task:nth-child(4) svg, .task.open svg {
    margin-left: -1px;
}
.task.split {
    width: 48px;
}
.task.split::after {
    left: 7px;
    background: linear-gradient(90deg, #76b9ed 69%, #5a85a8 69%);
}
.task.current {
    background: linear-gradient(90deg, #6b6e6e 88%, #555 88%);
}
.task.current::after {
    left: 0;
    width: 45px;
}
.task.alert {
    background: #b96d33;
    background-clip: padding-box;
    box-shadow: inset 0 -3px #ff6e00;
}
.tray {
    flex: 1;
    display: flex;
    align-items: center;
    color: #fff;
    font-size: 17px;
    letter-spacing: -.2px;
    border-right: 1px solid #888;
    margin-right: 5px;
}
.t-people { margin-left: 838px; }
.t-weather { margin-left: 30px; }
.t-temp { margin-left: 11px; width: 48px; }
.t-sky { width: 83px; white-space: nowrap; }
.t-up { margin-left: 9px; }
.t-meet { margin-left: 15px; }
.t-pen { margin-left: 15px; }
.t-time { margin-left: 19px; width: 57px; font-size: 14.500px; }
```
FILE: script.js
```js
// favicons of the open tabs, "!" marks the ones that are not dimmed
const groups = {
    'tabs-left': 'lines ' + 'fx '.repeat(18) + '!fx',
    'tabs-mid': '!nut doc k mq5 zoom coin fx fx fx mql !yt !yt !yt mq5 bing',
    'tabs-right': 'yt yt g mq5 mql horse lines g mq5 mq5 g !mql r fx mq5 horse horse g chart leaf fx mql g bing yt yt ' +
        'mql bing grid bing doc a a mq5 !g ms nyt zoom !mql fx mql yt g g fx ms'
};

for (const id in groups) {
    document.getElementById(id).innerHTML = groups[id].split(' ').map(name => {
        const lit = name.startsWith('!');
        return `<div class="tab${lit ? ' lit' : ''}"><svg><use href="#i-${name.replace('!', '')}"/></svg></div>`;
    }).join('');
}
```
